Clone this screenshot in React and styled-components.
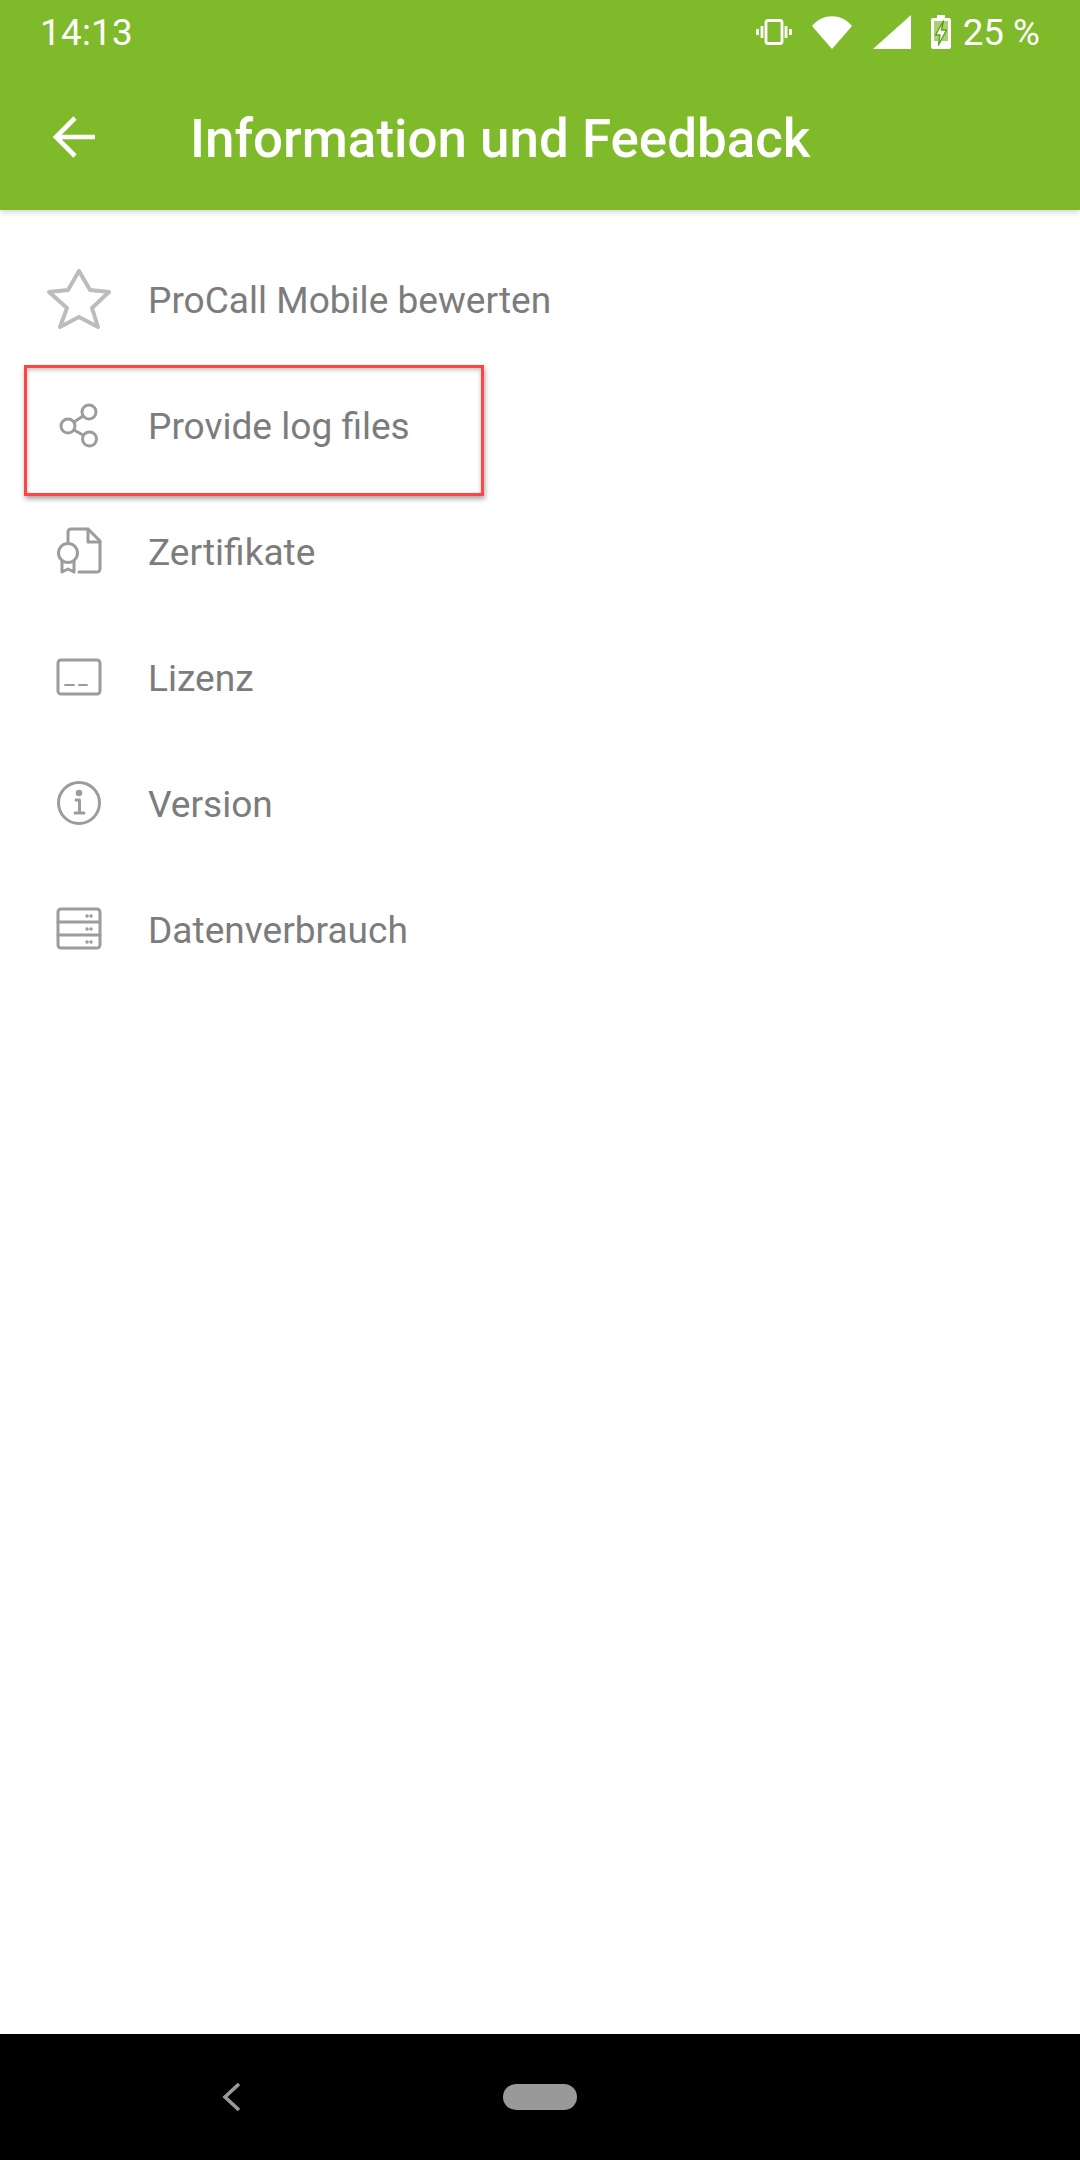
import styled, { createGlobalStyle } from "styled-components";

const GlobalStyle = createGlobalStyle`
  html, body {
    margin: 0;
    padding: 0;
    background: #fff;
  }
  body {
    font-family: Roboto, "Liberation Sans", sans-serif;
  }
`;

const Page = styled.div`
  width: 1080px;
  height: 2160px;
  display: flex;
  flex-direction: column;
  overflow: hidden;
`;

const Header = styled.header`
  height: 210px;
  background: #7fba2a;
  color: #fff;
  box-shadow: 0 2px 6px rgba(0, 0, 0, 0.18);
  position: relative;
  z-index: 1;
`;

const StatusBar = styled.div`
  height: 64px;
  padding: 0 40px;
  display: flex;
  align-items: center;
  justify-content: space-between;
  font-size: 36.75px;
`;

const Clock = styled.span`
  letter-spacing: 0.3px;
`;

const StatusIcons = styled.div`
  display: flex;
  align-items: center;
`;

const StatusIcon = styled.svg`
  flex: none;
  margin-right: ${(p) => p.$gap}px;
`;

const Toolbar = styled.div`
  height: 146px;
  display: flex;
  align-items: center;
  padding-left: 44px;
`;

const Title = styled.h1`
  margin: 3px 0 0 88px;
  font-size: 52.9px;
  font-weight: 500;
`;

const List = styled.main`
  flex: 1;
  padding-top: 27px;
`;

const Row = styled.div`
  position: relative;
  height: 126px;
  display: flex;
  align-items: center;
  padding-left: 44px;
`;

const RowIcon = styled.svg`
  width: 70px;
  height: 70px;
  flex: none;
  fill: none;
  stroke: ${(p) => p.$color || "#9c9c9c"};
  stroke-width: ${(p) => p.$weight || 3};
  stroke-linejoin: round;
  stroke-linecap: round;
`;

const Label = styled.span`
  margin: 1px 0 0 34px;
  font-size: 37.1px;
  color: #7c7c7c;
`;

const Highlight = styled.div`
  position: absolute;
  left: 24px;
  top: 2px;
  width: 460px;
  height: 131px;
  box-sizing: border-box;
  border: 3px solid #ff4444;
  box-shadow: 1px 3px 5px rgba(0, 0, 0, 0.35), inset 0 2px 4px rgba(0, 0, 0, 0.25);
`;

const NavBar = styled.footer`
  height: 126px;
  background: #000;
  display: flex;
  align-items: center;
  padding-left: 221px;
`;

const NavPill = styled.div`
  width: 74px;
  height: 26px;
  margin-left: 262px;
  border-radius: 13px;
  background: #999;
`;

const items = [
  {
    label: "ProCall Mobile bewerten",
    color: "#bcbcbc",
    weight: 4,
    icon: <path d="M35 6L46 25L65 27L48 43L54 62L35 52L16 62L23 43L5 27L24 25Z" />,
  },
  {
    label: "Provide log files",
    highlighted: true,
    icon: (
      <>
        <circle cx="45" cy="21" r="7" />
        <circle cx="24" cy="35" r="7" />
        <circle cx="45.5" cy="48" r="7" />
        <path d="M39 25L30 31M30 39L39 44" />
      </>
    ),
  },
  {
    label: "Zertifikate",
    icon: (
      <>
        <path d="M24 25V15a3 3 0 0 1 3-3H44L56 24V52a3 3 0 0 1-3 3H35" />
        <path d="M44 12V25H56" />
        <circle cx="24" cy="36" r="9.5" />
        <path d="M18 44V55L24 52L30 55V44" />
      </>
    ),
  },
  {
    label: "Lizenz",
    icon: (
      <>
        <rect x="14" y="17" width="42" height="34" rx="3" />
        <path d="M21 42H30M35 42H43" strokeWidth="2" />
      </>
    ),
  },
  {
    label: "Version",
    icon: (
      <>
        <circle cx="35" cy="34" r="20.5" />
        <circle cx="35" cy="24" r="1.8" fill="#9c9c9c" />
        <path d="M32 31H35.5V44M31 44H40" />
      </>
    ),
  },
  {
    label: "Datenverbrauch",
    icon: (
      <>
        <rect x="14" y="14" width="42" height="39" rx="3" />
        <path d="M14 27H56M14 40H56" />
        <path d="M43 21h.1M47 21h.1M43 34h.1M47 34h.1M43 47h.1M47 47h.1" strokeWidth="3.4" />
      </>
    ),
  },
];

const App = () => (
  <Page>
    <GlobalStyle />
    <Header>
      <StatusBar>
        <Clock>14:13</Clock>
        <StatusIcons>
          <StatusIcon $gap={20} width="36" height="26" viewBox="0 0 36 26" fill="none" stroke="#fff" strokeWidth="2.8">
            <rect x="10" y="1.5" width="16" height="23" rx="2" />
            <path d="M6 7v12M1.5 10v6M30 7v12M34.5 10v6" />
          </StatusIcon>
          <StatusIcon $gap={21} width="40" height="33" viewBox="0 0 40 33" fill="#fff">
            <path d="M0 10C11-3 29-3 40 10L20 33Z" />
          </StatusIcon>
          <StatusIcon $gap={20} width="38" height="34" viewBox="0 0 38 34" fill="#fff">
            <path d="M38 0V34H0Z" />
          </StatusIcon>
          <StatusIcon $gap={12} width="20" height="34" viewBox="0 0 20 34">
            <path d="M6 0H14V3H18a2 2 0 0 1 2 2V32a2 2 0 0 1-2 2H2a2 2 0 0 1-2-2V5a2 2 0 0 1 2-2H6Z" fill="#fff" />
            <rect x="3" y="6" width="14" height="20" fill="#a9d170" />
            <path d="M12.5 6L4.5 20H9L7.5 30L15.5 15H10.5Z" fill="#fff" stroke="#5f9e1e" strokeWidth="1.4" strokeLinejoin="round" />
          </StatusIcon>
          <span>25 %</span>
        </StatusIcons>
      </StatusBar>
      <Toolbar>
        <svg width="58" height="58" viewBox="0 0 58 58" fill="none" stroke="#fff" strokeWidth="4.6">
          <path d="M51 29H13M31 10L12 29L31 48" />
        </svg>
        <Title>Information und Feedback</Title>
      </Toolbar>
    </Header>
    <List>
      {items.map((item) => (
        <Row key={item.label}>
          <RowIcon viewBox="0 0 70 70" $color={item.color} $weight={item.weight}>
            {item.icon}
          </RowIcon>
          <Label>{item.label}</Label>
          {item.highlighted && <Highlight />}
        </Row>
      ))}
    </List>
    <NavBar>
      <svg width="20" height="28" viewBox="0 0 20 28" fill="none" stroke="#999" strokeWidth="3.6">
        <path d="M18 1L4 14L18 27" />
      </svg>
      <NavPill />
    </NavBar>
  </Page>
);

export default App;
